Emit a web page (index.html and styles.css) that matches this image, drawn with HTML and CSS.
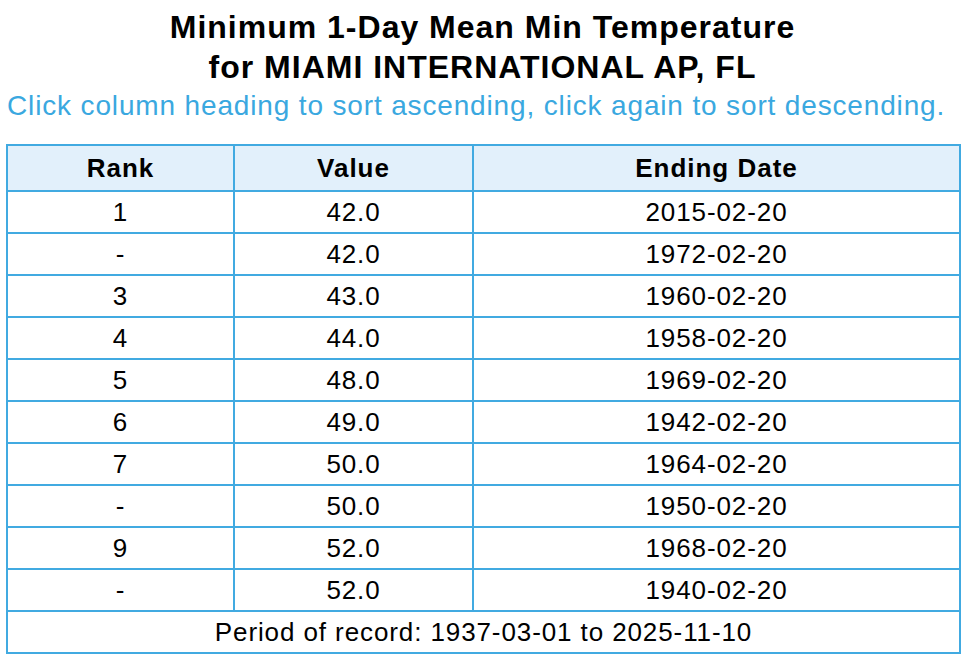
FILE: index.html
```html
<!DOCTYPE html>
<html lang="en">
<head>
	<meta charset="UTF-8">
	<meta name="viewport" content="width=device-width, initial-scale=1.0">
	<title>Minimum 1-Day Mean Min Temperature</title>
	<link rel="stylesheet" href="styles.css">
</head>
<body>
	<div class="page">
		<h1 class="title">Minimum 1-Day Mean Min Temperature<br>for MIAMI INTERNATIONAL AP, FL</h1>
		<p class="hint">Click column heading to sort ascending, click again to sort descending.</p>
		<table class="rank-table">
			<colgroup>
				<col class="col-rank">
				<col class="col-value">
				<col class="col-date">
			</colgroup>
			<thead>
				<tr>
					<th>Rank</th>
					<th>Value</th>
					<th>Ending Date</th>
				</tr>
			</thead>
			<tbody>
				<tr><td>1</td><td>42.0</td><td>2015-02-20</td></tr>
				<tr><td>-</td><td>42.0</td><td>1972-02-20</td></tr>
				<tr><td>3</td><td>43.0</td><td>1960-02-20</td></tr>
				<tr><td>4</td><td>44.0</td><td>1958-02-20</td></tr>
				<tr><td>5</td><td>48.0</td><td>1969-02-20</td></tr>
				<tr><td>6</td><td>49.0</td><td>1942-02-20</td></tr>
				<tr><td>7</td><td>50.0</td><td>1964-02-20</td></tr>
				<tr><td>-</td><td>50.0</td><td>1950-02-20</td></tr>
				<tr><td>9</td><td>52.0</td><td>1968-02-20</td></tr>
				<tr><td>-</td><td>52.0</td><td>1940-02-20</td></tr>
			</tbody>
			<tfoot>
				<tr><td colspan="3">Period of record: 1937-03-01 to 2025-11-10</td></tr>
			</tfoot>
		</table>
	</div>
</body>
</html>
```

FILE: styles.css
```css
body{
	margin: 0; background: #fff; color: #000;
	font-family: "Liberation Sans", Arial, sans-serif;
}
.page{ width: 953px; margin-left: 6px; }
.title{
	margin: 7px 0 0; font-size: 32px; line-height: 40px; font-weight: bold; text-align: center;
	letter-spacing: 1px;
}
.hint{
	margin: 1px 0 0 1px; font-size: 28px; line-height: 36px; color: #3aa8e0;
	letter-spacing: 0.85px;
}
.rank-table{
	width: 953px; margin-top: 20px; border-collapse: collapse; table-layout: fixed;
	font-size: 26px; letter-spacing: 0.9px;
}
.col-rank{ width: 227px; }
.col-value{ width: 239px; }
.col-date{ width: 487px; }
.rank-table th, .rank-table td{
	border: 2px solid #41aae1; text-align: center; padding: 0;
}
.rank-table th{
	height: 44px; background-color: #e2f0fb; font-weight: bold; letter-spacing: 1px;
}
.rank-table td{ height: 40px; }
```
